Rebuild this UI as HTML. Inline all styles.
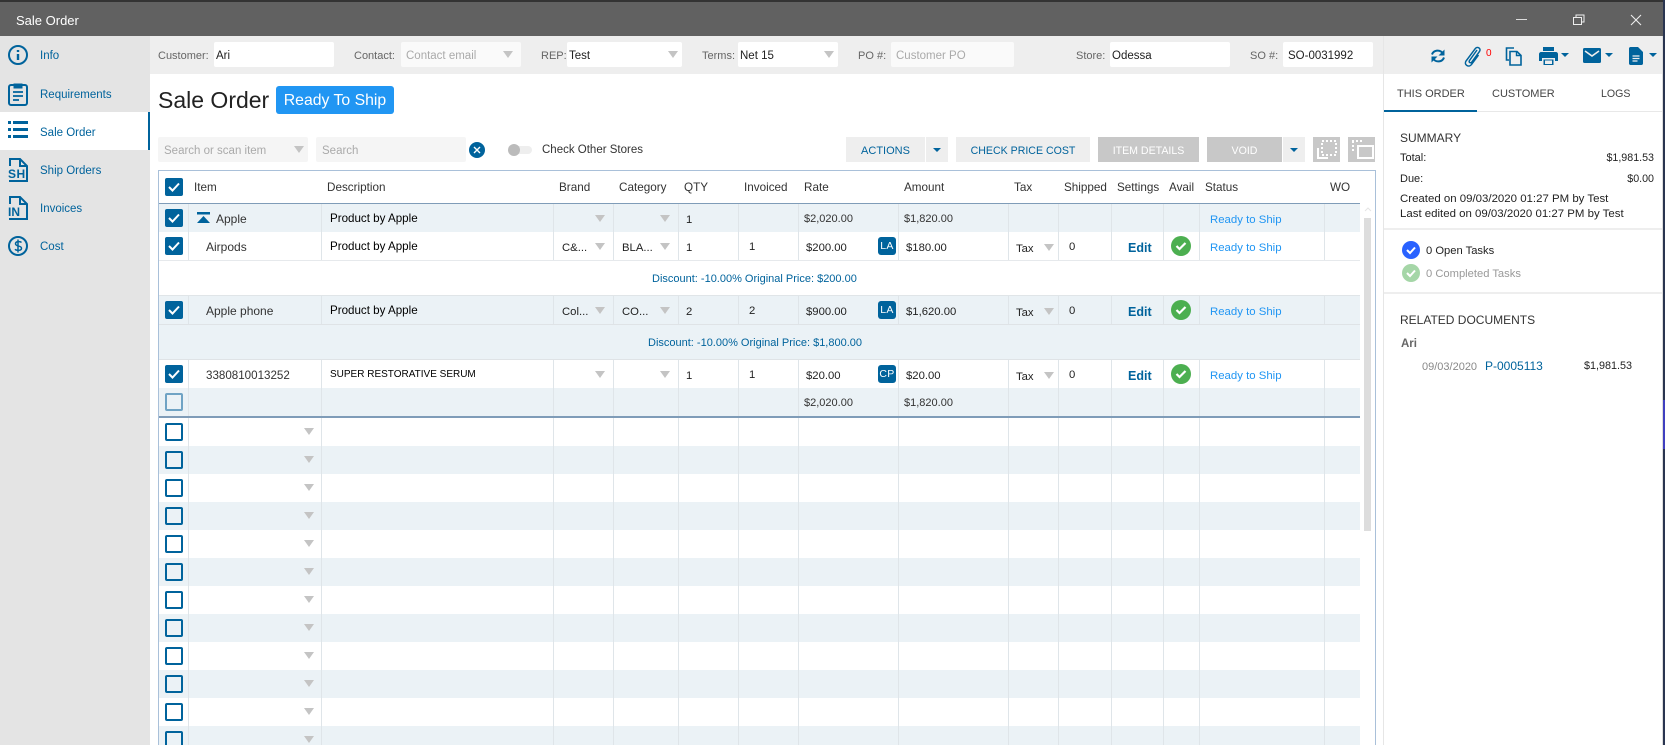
<!DOCTYPE html>
<html><head><meta charset="utf-8"><title>Sale Order</title>
<style>
html,body{margin:0;padding:0;width:1665px;height:745px;overflow:hidden;background:#fff}
body{position:relative;font:11.5px/16px "Liberation Sans",sans-serif;color:#333}
.a,.t,svg{position:absolute}
.t{white-space:nowrap;margin-top:1px}
.nav{left:40px;color:#00639c;font-size:11.5px}
.lab{top:47px;color:#666;font-size:11px}
.in{top:42px;height:25px;background:#fff;border-radius:2px}
.v{top:47px;color:#222;font-size:11.5px}
.ph{top:47px;color:#aaa;font-size:11.5px}
.h{top:179px;color:#333;font-size:11.7px}
.btn{top:137px;height:25px;background:#eee;color:#00639c;text-align:center;line-height:29px;font-size:10.6px}
.dis{background:#c8c8c8;color:#fff}
.ar{width:0;height:0;border-left:5px solid transparent;border-right:5px solid transparent;border-top:7px solid #c4c4c4;position:absolute}
.car{width:0;height:0;border-left:4px solid transparent;border-right:4px solid transparent;border-top:4px solid #00639c;position:absolute}
.r{left:159px;width:1201px;position:absolute}
.e{background:#ebf2f6}
.cb{position:absolute;left:165px;width:18px;height:18px;background:#00639c;border-radius:2px}
.cb svg{left:3px;top:4px}
.ck{position:absolute;left:165px;width:14px;height:14px;border:2px solid #00639c;border-radius:2px}
.d{font-size:11.6px;color:#000;left:330px}
.m{font-size:11px;color:#333}
.s{left:1210px;color:#2196f3;font-size:11.4px}
.ed{left:1128px;color:#00639c;font-weight:bold;font-size:12.5px}
.tag{position:absolute;left:878px;width:18px;height:18px;background:#00639c;border-radius:3px;color:#fff;font-size:10.5px;line-height:18px;text-align:center;letter-spacing:.3px}
.gc{position:absolute;left:1171px}
.p{color:#222;font-size:11.3px}
.nm{color:#333;font-size:12px}
</style></head><body>

<div class="a" style="left:0;top:0;width:1665px;height:2px;background:#333"></div>
<div class="a" style="left:0;top:2px;width:1665px;height:34px;background:#616161"></div>
<div class="t" style="left:16px;top:12px;color:#fff;font-size:13px">Sale Order</div>
<div class="a" style="left:1516px;top:19px;width:11px;height:1px;background:#ddd"></div>
<svg style="left:1572px;top:13px" width="14" height="14" viewBox="0 0 14 14" fill="none" stroke="#eee"><path d="M1.500 4.500h8v7h-8zM4 4V2h8v7h-2"/></svg>
<svg style="left:1629px;top:13px" width="14" height="14" viewBox="0 0 14 14" fill="none" stroke="#eee" stroke-width="1.100"><path d="M2 2l10 10M12 2L2 12"/></svg>

<!-- sidebar -->
<div class="a" style="left:0;top:36px;width:150px;height:709px;background:#e4e4e4"></div>
<div class="a" style="left:0;top:112px;width:148px;height:38px;background:#fff;border-right:2px solid #00639c"></div>
<svg style="left:7px;top:44px" width="22" height="22" viewBox="0 0 22 22" fill="none" stroke="#00639c" stroke-width="2"><circle cx="11" cy="11" r="9"/><path d="M11 10v6" stroke-width="2.400"/><path d="M11 6v2" stroke-width="2.400"/></svg>
<div class="t nav" style="top:47px">Info</div>
<svg style="left:7px;top:81px" width="22" height="26" viewBox="0 0 22 26" fill="none" stroke="#00639c" stroke-width="2"><rect x="2" y="4" width="18" height="20" rx="2"/><path d="M7 3h8v4H7z" fill="#00639c" stroke-width="1"/><path d="M6 11h10M6 15h10M6 19h6" stroke-width="1.800"/></svg>
<div class="t nav" style="top:86px">Requirements</div>
<svg style="left:8px;top:120px" width="21" height="20" viewBox="0 0 21 20" fill="#00639c"><path d="M0 1h3v3H0zM5 1h15v3H5zM0 8h3v3H0zM5 8h15v3H5zM0 15h3v3H0zM5 15h15v3H5z"/></svg>
<div class="t nav" style="top:124px;color:#00639c">Sale Order</div>
<svg style="left:7px;top:157px" width="22" height="26" viewBox="0 0 22 26" fill="none" stroke="#00639c" stroke-width="2"><path d="M3 9V2h10l7 7v15H3v-1M13 2v7h7"/><text x="1" y="21" font-family="Liberation Sans" font-weight="bold" font-size="12" letter-spacing="0.500" fill="#00639c" stroke="none">SH</text></svg>
<div class="t nav" style="top:162px">Ship Orders</div>
<svg style="left:7px;top:195px" width="22" height="26" viewBox="0 0 22 26" fill="none" stroke="#00639c" stroke-width="2"><path d="M3 9V2h10l7 7v15H3v-1M13 2v7h7"/><text x="1" y="21" font-family="Liberation Sans" font-weight="bold" font-size="12" fill="#00639c" stroke="none">IN</text></svg>
<div class="t nav" style="top:200px">Invoices</div>
<svg style="left:7px;top:235px" width="22" height="22" viewBox="0 0 22 22" fill="none" stroke="#00639c" stroke-width="2"><circle cx="11" cy="11" r="9"/><path d="M14.500 7.500c-1-1.200-6-1.500-6 1.300 0 3 6 1.500 6 4.400 0 2.800-5.200 2.500-6.500 1M11 4.500v13" stroke-width="1.500"/></svg>
<div class="t nav" style="top:238px">Cost</div>

<!-- header bar -->
<div class="a" style="left:150px;top:36px;width:1512px;height:38px;background:#eee"></div>
<div class="a" style="left:1383px;top:36px;width:1px;height:709px;background:#e6e6e6"></div>

<div class="t lab" style="left:158px">Customer:</div>
<div class="a in" style="left:214px;width:120px"></div><div class="t v" style="left:216px">Ari</div>
<div class="t lab" style="left:354px">Contact:</div>
<div class="a in" style="left:401px;width:120px;background:#fafafa"></div><div class="t ph" style="left:406px">Contact email</div><i class="ar" style="left:503px;top:51px"></i>
<div class="t lab" style="left:541px">REP:</div>
<div class="a in" style="left:567px;width:115px"></div><div class="t v" style="left:569px">Test</div><i class="ar" style="left:668px;top:51px"></i>
<div class="t lab" style="left:702px">Terms:</div>
<div class="a in" style="left:738px;width:100px"></div><div class="t v" style="left:740px">Net 15</div><i class="ar" style="left:824px;top:51px"></i>
<div class="t lab" style="left:858px">PO #:</div>
<div class="a in" style="left:891px;width:123px;background:#fafafa"></div><div class="t ph" style="left:896px">Customer PO</div>
<div class="t lab" style="left:1076px">Store:</div>
<div class="a in" style="left:1110px;width:120px"></div><div class="t v" style="left:1112px">Odessa</div>
<div class="t lab" style="left:1250px">SO #:</div>
<div class="a in" style="left:1283px;width:90px"></div><div class="t v" style="left:1288px">SO-0031992</div>

<!-- toolbar icons -->
<svg style="left:1429px;top:46px" width="18" height="20" viewBox="0 0 18 20" fill="none" stroke="#00639c" stroke-width="2"><path d="M3 8.500C4.500 4 11 3 14 7.500M15 11.500C13.500 16 7 17 4 12.500"/><path d="M15.500 3.500v6h-6z" fill="#00639c" stroke="none"/><path d="M2.500 16.500v-6h6z" fill="#00639c" stroke="none"/></svg>
<svg style="left:1463px;top:45px" width="19" height="22" viewBox="0 0 19 22" fill="none" stroke="#00639c" stroke-width="1.500"><path d="M14 5 6.500 15.500c-1.200 1.800 1 3 2.300 1.600L16.500 6.500c2-3-2.200-5.700-4.300-2.800L3 16c-2.500 3.800 3 7 5.500 3.500l7-9.500"/></svg>
<div class="t" style="left:1486px;top:46px;color:#f00;font-size:10px;line-height:14px">0</div>
<svg style="left:1505px;top:47px" width="18" height="19" viewBox="0 0 18 19" fill="none" stroke="#00639c" stroke-width="1.600"><path d="M9 1H1.500v12H4"/><path d="M5 4.500h7l4 4V18H5z"/><path d="M11.500 4.500v4H16" stroke-width="1.400"/></svg>
<svg style="left:1539px;top:47px" width="19" height="18" viewBox="0 0 19 18" fill="#00639c"><path d="M4 0h11v4H4z"/><path d="M2 5h15c1 0 2 1 2 2v7h-3v-3H3v3H0V7c0-1 1-2 2-2z"/><path d="M4.500 12.500h10V18h-10z"/><path d="M6 13.500h7V17H6z" fill="#eee"/></svg>
<i class="car" style="left:1561px;top:53px"></i>
<svg style="left:1583px;top:48px" width="18" height="15" viewBox="0 0 18 15"><rect width="18" height="15" rx="1.500" fill="#00639c"/><path d="M2 3l7 5 7-5" fill="none" stroke="#eee" stroke-width="1.600"/></svg>
<i class="car" style="left:1605px;top:53px"></i>
<svg style="left:1629px;top:47px" width="14" height="18" viewBox="0 0 14 18"><path d="M1.500 0H9l5 5v11.500c0 .8-.7 1.500-1.500 1.500h-11C.7 18 0 17.300 0 16.500v-15C0 .7.700 0 1.500 0z" fill="#00639c"/><path d="M3.500 9h7M3.500 11.500h7M3.500 14h5" stroke="#eee" stroke-width="1.200"/></svg>
<i class="car" style="left:1649px;top:53px"></i>

<!-- title -->
<div class="t" style="left:158px;top:86px;margin-top:0;font-size:23px;line-height:28px;color:#222">Sale Order</div>
<div class="a" style="left:276px;top:86px;width:118px;height:28px;background:#2196f3;border-radius:3px;color:#fff;font-size:15.8px;line-height:30px;text-align:center;overflow:hidden">Ready To Ship</div>

<!-- search row -->
<div class="a" style="left:158px;top:137px;width:150px;height:25px;background:#f5f5f5;border-radius:2px"></div>
<div class="t" style="left:164px;top:142px;color:#aaa">Search or scan item</div><i class="ar" style="left:294px;top:146px"></i>
<div class="a" style="left:316px;top:137px;width:150px;height:25px;background:#f5f5f5;border-radius:2px"></div>
<div class="t" style="left:322px;top:142px;color:#aaa">Search</div>
<svg style="left:469px;top:142px" width="16" height="16" viewBox="0 0 16 16"><circle cx="8" cy="8" r="8" fill="#00639c"/><path d="M5 5l6 6M11 5l-6 6" stroke="#fff" stroke-width="1.400"/></svg>
<div class="a" style="left:508px;top:146px;width:24px;height:8px;background:#eee;border-radius:4px"></div>
<div class="a" style="left:508px;top:144px;width:12px;height:12px;background:#bbb;border-radius:6px"></div>
<div class="t" style="left:542px;top:141px;color:#333">Check Other Stores</div>

<div class="a btn" style="left:846px;width:79px;font-size:11px">ACTIONS</div>
<div class="a btn" style="left:926px;width:22px"></div><i class="car" style="left:933px;top:148px"></i>
<div class="a btn" style="left:956px;width:134px">CHECK PRICE COST</div>
<div class="a btn dis" style="left:1098px;width:101px">ITEM DETAILS</div>
<div class="a btn dis" style="left:1207px;width:75px">VOID</div>
<div class="a btn" style="left:1283px;width:22px"></div><i class="car" style="left:1290px;top:148px"></i>
<div class="a btn dis" style="left:1313px;width:27px"></div>
<svg style="left:1313px;top:137px" width="27" height="25" viewBox="0 0 27 25" fill="none" stroke="#fff"><path d="M9 4h14v14H9z" stroke-width="2" stroke-dasharray="2 2"/><path d="M5 11v10h10" stroke-width="2"/></svg>
<div class="a btn dis" style="left:1348px;width:27px"></div>
<svg style="left:1348px;top:137px" width="27" height="25" viewBox="0 0 27 25" fill="none" stroke="#fff"><path d="M4 4h11M5 4v12" stroke-width="2" stroke-dasharray="2 2"/><path d="M10 9h15v12H10z" stroke-width="2"/></svg>

<!-- table frame -->
<div class="a" style="left:158px;top:170px;width:1216px;height:575px;border:1px solid #a9c0d9;border-bottom:0"></div>
<div class="a" style="left:159px;top:203px;width:1201px;height:1px;background:#7f9cb8"></div>
<svg style="left:1364px;top:206px" width="8" height="6" viewBox="0 0 8 6" fill="none" stroke="#e4e4e4"><path d="M1 5l3-3 3 3"/></svg>
<div class="a" style="left:1364px;top:218px;width:7px;height:313px;background:#ddd"></div>

<div class="t h" style="left:194px">Item</div><div class="t h" style="left:327px">Description</div><div class="t h" style="left:559px">Brand</div><div class="t h" style="left:619px">Category</div><div class="t h" style="left:684px">QTY</div><div class="t h" style="left:744px">Invoiced</div><div class="t h" style="left:804px">Rate</div><div class="t h" style="left:904px">Amount</div><div class="t h" style="left:1014px">Tax</div><div class="t h" style="left:1064px">Shipped</div><div class="t h" style="left:1117px">Settings</div><div class="t h" style="left:1169px">Avail</div><div class="t h" style="left:1205px">Status</div><div class="t h" style="left:1330px">WO</div>

<!-- row backgrounds -->
<div class="r e" style="top:204px;height:28px"></div>
<div class="r" style="top:260px;height:1px;background:#e6e9ec"></div>
<div class="r" style="top:295px;height:1px;background:#e0e5e8"></div>
<div class="r e" style="top:296px;height:28px"></div>
<div class="r" style="top:324px;height:1px;background:#dfe3e6"></div>
<div class="r e" style="top:325px;height:34px"></div>
<div class="r" style="top:359px;height:1px;background:#dfe3e6"></div>
<div class="r e" style="top:388px;height:28px"></div>
<div class="r" style="top:416px;height:2px;background:#7f9cb8"></div>
<div class="r e" style="top:446px;height:28px"></div>
<div class="r e" style="top:502px;height:28px"></div>
<div class="r e" style="top:558px;height:28px"></div>
<div class="r e" style="top:614px;height:28px"></div>
<div class="r e" style="top:670px;height:28px"></div>
<div class="r e" style="top:726px;height:19px"></div>

<!-- column lines -->
<svg style="left:0;top:0" width="1400" height="745"><g stroke="#dfe5e9" stroke-width="1" fill="none"><path d="M188.500 204V260M188.500 296V324M188.500 360V416M188.500 418V745M321.500 204V260M321.500 296V324M321.500 360V416M321.500 418V745M553.500 204V260M553.500 296V324M553.500 360V416M553.500 418V745M613.500 204V260M613.500 296V324M613.500 360V416M613.500 418V745M678.500 204V260M678.500 296V324M678.500 360V416M678.500 418V745M738.500 204V260M738.500 296V324M738.500 360V416M738.500 418V745M798.500 204V260M798.500 296V324M798.500 360V416M798.500 418V745M898.500 204V260M898.500 296V324M898.500 360V416M898.500 418V745M1008.500 204V260M1008.500 296V324M1008.500 360V416M1008.500 418V745M1058.500 204V260M1058.500 296V324M1058.500 360V416M1058.500 418V745M1111.500 204V260M1111.500 296V324M1111.500 360V416M1111.500 418V745M1163.500 204V260M1163.500 296V324M1163.500 360V416M1163.500 418V745M1199.500 204V260M1199.500 296V324M1199.500 360V416M1199.500 418V745M1324.500 204V260M1324.500 296V324M1324.500 360V416M1324.500 418V745"/></g></svg>

<!-- checkboxes -->
<div class="cb" style="top:178px"><svg width="12" height="10" viewBox="0 0 12 10" fill="none" stroke="#fff" stroke-width="2"><path d="M1 5l3.500 3.500L11 1.500"/></svg></div>
<div class="cb" style="top:209px"><svg width="12" height="10" viewBox="0 0 12 10" fill="none" stroke="#fff" stroke-width="2"><path d="M1 5l3.500 3.500L11 1.500"/></svg></div>
<div class="cb" style="top:237px"><svg width="12" height="10" viewBox="0 0 12 10" fill="none" stroke="#fff" stroke-width="2"><path d="M1 5l3.500 3.500L11 1.500"/></svg></div>
<div class="cb" style="top:301px"><svg width="12" height="10" viewBox="0 0 12 10" fill="none" stroke="#fff" stroke-width="2"><path d="M1 5l3.500 3.500L11 1.500"/></svg></div>
<div class="cb" style="top:365px"><svg width="12" height="10" viewBox="0 0 12 10" fill="none" stroke="#fff" stroke-width="2"><path d="M1 5l3.500 3.500L11 1.500"/></svg></div>
<div class="ck" style="top:393px;border-color:#6fa3c4"></div>
<div class="ck" style="top:423px"></div><div class="ck" style="top:451px"></div><div class="ck" style="top:479px"></div><div class="ck" style="top:507px"></div><div class="ck" style="top:535px"></div><div class="ck" style="top:563px"></div><div class="ck" style="top:591px"></div><div class="ck" style="top:619px"></div><div class="ck" style="top:647px"></div><div class="ck" style="top:675px"></div><div class="ck" style="top:703px"></div><div class="ck" style="top:731px"></div>

<!-- item dropdown arrows, empty rows -->
<i class="ar" style="left:304px;top:428px"></i><i class="ar" style="left:304px;top:456px"></i><i class="ar" style="left:304px;top:484px"></i><i class="ar" style="left:304px;top:512px"></i><i class="ar" style="left:304px;top:540px"></i><i class="ar" style="left:304px;top:568px"></i><i class="ar" style="left:304px;top:596px"></i><i class="ar" style="left:304px;top:624px"></i><i class="ar" style="left:304px;top:652px"></i><i class="ar" style="left:304px;top:680px"></i><i class="ar" style="left:304px;top:708px"></i><i class="ar" style="left:304px;top:736px"></i>

<!-- row: Apple -->
<svg style="left:197px;top:212px" width="14" height="12" viewBox="0 0 14 12" fill="#00639c"><path d="M0 0h13v2.500H0z"/><path d="M6.500 4L13 11H0z"/></svg>
<div class="t nm" style="left:216px;top:210px">Apple</div>
<div class="t d" style="top:210px">Product by Apple</div>
<i class="ar" style="left:595px;top:215px"></i><i class="ar" style="left:660px;top:215px"></i>
<div class="t p" style="left:686px;top:211px">1</div>
<div class="t m" style="left:804px;top:210px">$2,020.00</div>
<div class="t m" style="left:904px;top:210px">$1,820.00</div>
<div class="t s" style="top:211px">Ready to Ship</div>

<!-- row: Airpods -->
<div class="t nm" style="left:206px;top:238px">Airpods</div>
<div class="t d" style="top:238px">Product by Apple</div>
<div class="t p" style="left:562px;top:239px">C&amp;...</div><i class="ar" style="left:595px;top:243px"></i>
<div class="t p" style="left:622px;top:239px">BLA...</div><i class="ar" style="left:660px;top:243px"></i>
<div class="t p" style="left:686px;top:239px">1</div><div class="t p" style="left:749px;top:238px">1</div>
<div class="t p" style="left:806px;top:239px">$200.00</div>
<div class="tag" style="top:237px">LA</div>
<div class="t p" style="left:906px;top:239px">$180.00</div>
<div class="t p" style="left:1016px;top:240px">Tax</div><i class="ar" style="left:1044px;top:244px"></i>
<div class="t p" style="left:1069px;top:238px">0</div>
<div class="t ed" style="top:239px">Edit</div>
<svg class="gc" style="top:236px" width="20" height="20" viewBox="0 0 20 20"><circle cx="10" cy="10" r="10" fill="#4caf50"/><path d="M5.500 10l3 3 6-6" fill="none" stroke="#fff" stroke-width="2.200"/></svg>
<div class="t s" style="top:239px">Ready to Ship</div>

<div class="t" style="left:652px;top:270px;color:#00639c;font-size:11px">Discount: -10.00% Original Price: $200.00</div>

<!-- row: Apple phone -->
<div class="t nm" style="left:206px;top:302px">Apple phone</div>
<div class="t d" style="top:302px">Product by Apple</div>
<div class="t p" style="left:562px;top:303px">Col...</div><i class="ar" style="left:595px;top:307px"></i>
<div class="t p" style="left:622px;top:303px">CO...</div><i class="ar" style="left:660px;top:307px"></i>
<div class="t p" style="left:686px;top:303px">2</div><div class="t p" style="left:749px;top:302px">2</div>
<div class="t p" style="left:806px;top:303px">$900.00</div>
<div class="tag" style="top:301px">LA</div>
<div class="t p" style="left:906px;top:303px">$1,620.00</div>
<div class="t p" style="left:1016px;top:304px">Tax</div><i class="ar" style="left:1044px;top:308px"></i>
<div class="t p" style="left:1069px;top:302px">0</div>
<div class="t ed" style="top:303px">Edit</div>
<svg class="gc" style="top:300px" width="20" height="20" viewBox="0 0 20 20"><circle cx="10" cy="10" r="10" fill="#4caf50"/><path d="M5.500 10l3 3 6-6" fill="none" stroke="#fff" stroke-width="2.200"/></svg>
<div class="t s" style="top:303px">Ready to Ship</div>

<div class="t" style="left:648px;top:334px;color:#00639c;font-size:11px">Discount: -10.00% Original Price: $1,800.00</div>

<!-- row: serum -->
<div class="t nm" style="left:206px;top:367px;font-size:11.6px">3380810013252</div>
<div class="t d" style="top:366px;font-size:10px">SUPER RESTORATIVE SERUM</div>
<i class="ar" style="left:595px;top:371px"></i><i class="ar" style="left:660px;top:371px"></i>
<div class="t p" style="left:686px;top:367px">1</div><div class="t p" style="left:749px;top:366px">1</div>
<div class="t p" style="left:806px;top:367px">$20.00</div>
<div class="tag" style="top:365px">CP</div>
<div class="t p" style="left:906px;top:367px">$20.00</div>
<div class="t p" style="left:1016px;top:368px">Tax</div><i class="ar" style="left:1044px;top:372px"></i>
<div class="t p" style="left:1069px;top:366px">0</div>
<div class="t ed" style="top:367px">Edit</div>
<svg class="gc" style="top:364px" width="20" height="20" viewBox="0 0 20 20"><circle cx="10" cy="10" r="10" fill="#4caf50"/><path d="M5.500 10l3 3 6-6" fill="none" stroke="#fff" stroke-width="2.200"/></svg>
<div class="t s" style="top:367px">Ready to Ship</div>

<!-- totals -->
<div class="t m" style="left:804px;top:394px">$2,020.00</div>
<div class="t m" style="left:904px;top:394px">$1,820.00</div>

<!-- right panel -->
<div class="t" style="left:1397px;top:85px;color:#444;font-size:11px">THIS ORDER</div>
<div class="t" style="left:1492px;top:85px;color:#444;font-size:11px">CUSTOMER</div>
<div class="t" style="left:1601px;top:85px;color:#444;font-size:10.6px">LOGS</div>
<div class="a" style="left:1384px;top:111px;width:278px;height:1px;background:#e8e8e8"></div>
<div class="a" style="left:1384px;top:110px;width:93px;height:2px;background:#00639c"></div>

<div class="t" style="left:1400px;top:129px;color:#333;font-size:12px">SUMMARY</div>
<div class="t p" style="left:1400px;top:149px;font-size:11px">Total:</div>
<div class="t p" style="right:11px;top:149px;font-size:10.7px">$1,981.53</div>
<div class="t p" style="left:1400px;top:170px;font-size:11px">Due:</div>
<div class="t p" style="right:11px;top:170px;font-size:10.7px">$0.00</div>
<div class="t p" style="left:1400px;top:190px;font-size:11.45px">Created on 09/03/2020 01:27 PM by Test</div>
<div class="t p" style="left:1400px;top:205px;font-size:11.45px">Last edited on 09/03/2020 01:27 PM by Test</div>
<div class="a" style="left:1384px;top:228px;width:278px;height:2px;background:#eee"></div>
<svg style="left:1402px;top:241px" width="18" height="18" viewBox="0 0 18 18"><circle cx="9" cy="9" r="9" fill="#2962ff"/><path d="M5 9l3 3 5-5.500" fill="none" stroke="#fff" stroke-width="2"/></svg>
<div class="t p" style="left:1426px;top:242px;font-size:11.2px">0 Open Tasks</div>
<svg style="left:1402px;top:264px" width="18" height="18" viewBox="0 0 18 18"><circle cx="9" cy="9" r="9" fill="#a5d6a7"/><path d="M5 9l3 3 5-5.500" fill="none" stroke="#fff" stroke-width="2"/></svg>
<div class="t" style="left:1426px;top:265px;font-size:11.2px;color:#999">0 Completed Tasks</div>
<div class="a" style="left:1384px;top:292px;width:278px;height:2px;background:#eee"></div>
<div class="t" style="left:1400px;top:311px;color:#333;font-size:12px">RELATED DOCUMENTS</div>
<div class="t" style="left:1401px;top:335px;color:#666;font-weight:bold;font-size:11.5px">Ari</div>
<div class="t" style="left:1422px;top:358px;color:#888;font-size:11px">09/03/2020</div>
<div class="t" style="left:1485px;top:357px;color:#00639c;font-size:12px">P-0005113</div>
<div class="t p" style="left:1584px;top:357px;font-size:10.8px">$1,981.53</div>

<!-- right edge -->
<div class="a" style="left:1662px;top:36px;width:1px;height:709px;background:#ddd"></div>
<div class="a" style="left:1663px;top:0;width:2px;height:745px;background:#2a3550"></div>
<div class="a" style="left:1663px;top:400px;width:2px;height:49px;background:#4040c0"></div>
</body></html>
